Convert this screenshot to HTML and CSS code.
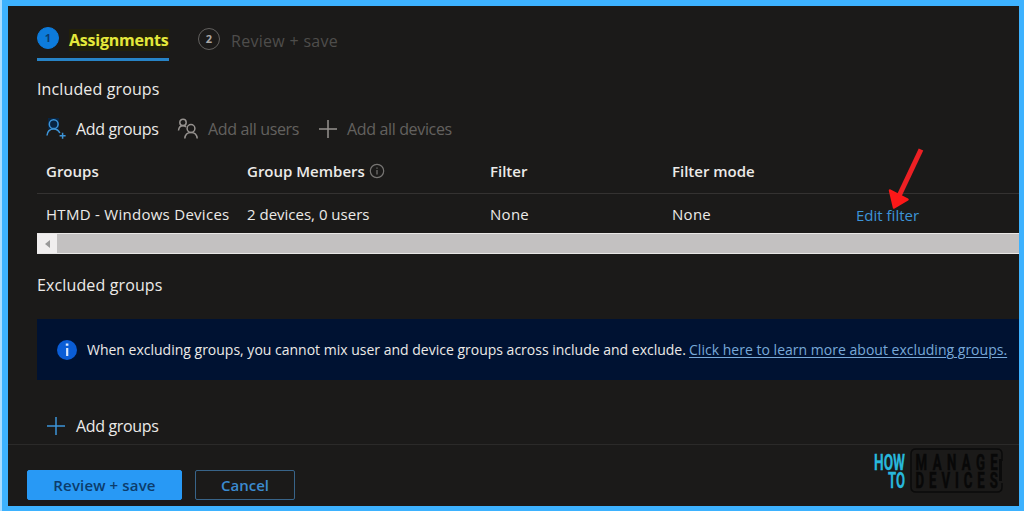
FILE: index.html
```html
<!DOCTYPE html>
<html lang="en">
<head>
    <meta charset="UTF-8">
    <title>Assignments</title>
    <link rel="stylesheet" href="styles.css">
</head>
<body>
    <div class="frame">
        <nav class="tabs">
            <div class="tab active">
                <span class="step">1</span>
                <span class="tab-label">Assignments</span>
            </div>
            <div class="tab">
                <span class="step">2</span>
                <span class="tab-label">Review + save</span>
            </div>
        </nav>

        <main class="content">
            <h2 class="included">Included groups</h2>

            <div class="toolbar">
                <button class="tool add-groups">
                    <svg width="22" height="22" viewBox="0 0 22 22">
                        <rect class="icon-shade" x="3" y="0" width="11" height="11" />
                        <circle cx="8.7" cy="6.2" r="4.4" />
                        <path d="M2 17.5C2.4 13.6 5 11 8.7 11c3 0 5 1.5 6.1 4M17.6 14.8v6M14.6 17.8h6" />
                    </svg>
                    <span>Add groups</span>
                </button>
                <button class="tool all-users disabled">
                    <svg width="22" height="22" viewBox="0 0 22 22">
                        <circle cx="6" cy="4.4" r="3.2" />
                        <path d="M1.5 12.5C1.8 9.900 3.500 7.800 6 7.800c1.300 0 2.300.4 3.100 1.100" />
                        <circle cx="14" cy="10.5" r="3.9" />
                        <path d="M7.800 20.500c.3-3.800 2.600-6.100 6.200-6.100s5.900 2.300 6.200 6.100" />
                    </svg>
                    <span>Add all users</span>
                </button>
                <button class="tool all-devices disabled">
                    <svg width="20" height="20" viewBox="0 0 20 20">
                        <path d="M10 1v18M1 10h18" />
                    </svg>
                    <span>Add all devices</span>
                </button>
            </div>

            <div class="table">
                <div class="row head">
                    <span>Groups</span>
                    <span class="members"><span>Group Members</span>
                        <svg width="16" height="16" viewBox="0 0 16 16">
                            <circle cx="8" cy="8" r="6.7" />
                            <path d="M8 7v4.5M8 4.500v1.300" />
                        </svg>
                    </span>
                    <span>Filter</span>
                    <span>Filter mode</span>
                </div>
                <div class="row">
                    <span class="name">HTMD - Windows Devices</span>
                    <span>2 devices, 0 users</span>
                    <span class="name">None</span>
                    <span class="name">None</span>
                    <a class="edit-filter">Edit filter</a>
                </div>
            </div>
            <div class="scrollbar">
                <div class="scroll-left"></div>
                <div class="scroll-thumb"></div>
            </div>

            <h2 class="excluded">Excluded groups</h2>

            <div class="banner">
                <svg width="20" height="20" viewBox="0 0 20 20">
                    <circle cx="10" cy="10" r="10" />
                    <path d="M8.500 8h2.800v8h-2.200V8M8.800 3.500h2.600v2.300H8.800z" />
                </svg>
                <span class="notice">When excluding groups, you cannot mix user and device groups across include and exclude.</span>
                <a class="learn-more">Click here to learn more about excluding groups.</a>
            </div>

            <button class="tool add-excluded">
                <svg width="20" height="20" viewBox="0 0 20 20">
                    <path d="M10 1v18M1 10h18" />
                </svg>
                <span>Add groups</span>
            </button>
        </main>

        <footer class="footer">
            <button class="btn primary">Review + save</button>
            <button class="btn cancel">Cancel</button>
            <svg class="brand" width="132" height="48" viewBox="0 0 132 48">
                <g class="brand-how">
                    <text x="1" y="24" textLength="31" lengthAdjust="spacingAndGlyphs">HOW</text>
                    <text x="15" y="42" textLength="17" lengthAdjust="spacingAndGlyphs">TO</text>
                </g>
                <path class="brand-box" d="M129 15V8q0-5-5-5H43q-5 0-5 5v33q0 5 5 5h81q5 0 5-5v-4" />
                <path class="brand-pen" d="M127.500 13v22" />
                <g class="brand-name" transform="scale(.6 1)">
                    <text x="71" y="24" textLength="137">MANAGE</text>
                    <text x="71" y="42" textLength="137">DEVICES</text>
                </g>
            </svg>
        </footer>
    </div>

    <svg class="arrow" width="40" height="66" viewBox="0 0 40 66">
        <path class="arrow-line" d="M35 3.500 13 50" />
        <path class="arrow-head" d="M4 44.500 21.500 53.500 8 61.500z" />
    </svg>
</body>
</html>
```

FILE: styles.css
```css
:root {
    --bg: #1b1a19;
    --frame: #3db2ff;
    --text: #eceae8;
    --muted: #63615f;
    --blue: #3d94d8;
}

* {
    box-sizing: border-box;
}

html {
    background: linear-gradient(90deg, #a9dcff 2px, var(--frame) 2px);
}

body {
    margin: 0;
    font-family: 'Open Sans', 'Noto Sans', sans-serif;
    font-size: 15px;
    color: var(--text);
}

svg {
    display: block;
    flex: none;
    fill: none;
    stroke: currentColor;
    stroke-width: 1.5;
}

.frame {
    display: flex;
    flex-direction: column;
    width: 1022px;
    height: 511px;
    margin-left: 2px;
    border: solid var(--frame);
    border-width: 6px 5px 5px 6px;
    background: var(--bg);
    overflow: hidden;
    white-space: nowrap;
}

.tabs {
    display: flex;
    gap: 29px;
    height: 55px;
    padding: 12px 0 0 29px;
}

.tab {
    display: flex;
    align-items: center;
    gap: 10px;
    height: 43px;
    color: #4e4d4b;
}

.step {
    flex: none;
    width: 22px;
    height: 22px;
    margin-bottom: 3px;
    border: 1.5px solid #62605e;
    border-radius: 50%;
    font-size: 11px;
    font-weight: 700;
    line-height: 19px;
    text-align: center;
    color: #aaa8a6;
}

.tab-label {
    padding-left: 1px;
    font-size: 16px;
    letter-spacing: 0.3px;
}

.tab.active {
    width: 132px;
    border-bottom: 3px solid #2783c6;
}

.tab.active .step {
    margin-bottom: 0;
    background: #0d7bdb;
    border-color: #0d7bdb;
    color: #0a3b70;
}

.tab.active .tab-label {
    margin-top: 4px;
    padding: 0;
    font-weight: 700;
    color: #e4e83b;
    background: #222009;
    letter-spacing: -0.22px;
    line-height: 22px;
}

.tab:not(.active) .step {
    margin-bottom: 1px;
}

.tab:not(.active) .tab-label {
    margin-top: 2px;
}

.content {
    height: 383px;
    padding-left: 29px;
}

h2 {
    margin: 0;
    font-size: 16px;
    font-weight: 400;
    letter-spacing: 0.13px;
}

.included {
    height: 54px;
    line-height: 56px;
}

.toolbar {
    display: flex;
    align-items: center;
    height: 27px;
    padding-left: 8px;
}

.tool {
    display: flex;
    align-items: center;
    gap: 9px;
    padding: 0;
    border: 0;
    background: none;
    color: var(--text);
    font: inherit;
    font-size: 16px;
    font-weight: 500;
    letter-spacing: -0.35px;
}

.tool svg {
    color: var(--blue);
}

.add-groups {
    width: 132px;
}

.all-users {
    width: 141px;
}

.disabled {
    color: var(--muted);
    font-weight: 400;
}

.disabled svg {
    color: #96928f;
}

.icon-shade {
    fill: #082543;
    stroke: none;
}

.row {
    display: grid;
    grid-template-columns: 201px 243px 182px 184px 1fr;
    align-items: center;
    height: 39px;
    padding-left: 9px;
}

.row.head {
    height: 52px;
    padding-top: 6px;
    border-bottom: 1px solid #343231;
    font-weight: 600;
}

.name {
    letter-spacing: 0.28px;
}

.members {
    display: flex;
    align-items: center;
    gap: 4px;
}

.members svg {
    color: #777573;
    stroke-width: 1.2;
}

.edit-filter {
    color: var(--blue);
    padding-top: 3px;
}

.scrollbar {
    display: flex;
    height: 21px;
    border: solid #e9e7e6;
    border-width: 1px 0;
    background: #c3c1c1;
}

.scroll-left {
    display: flex;
    align-items: center;
    justify-content: center;
    width: 20px;
    background: #f0eeee;
}

.scroll-left::before {
    content: '';
    border: solid transparent;
    border-width: 4px 5px 4px 0;
    border-right-color: #999;
}

.excluded {
    height: 65px;
    line-height: 62px;
}

.banner {
    display: flex;
    align-items: center;
    height: 61px;
    padding-left: 20px;
    background: #001232;
    font-size: 14px;
}

.banner svg {
    margin-right: 10px;
    stroke: none;
    fill: #d8e8ff;
}

.banner circle {
    fill: #0a5dd6;
}

.notice {
    width: 602px;
}

.learn-more {
    color: #78a9d9;
    text-decoration: underline;
    text-underline-offset: 2px;
    letter-spacing: 0.02px;
}

.add-excluded {
    gap: 10px;
    margin: 35px 0 0 9px;
}

.footer {
    display: flex;
    flex: 1;
    align-items: flex-start;
    border-top: 1px solid #2b2a29;
    padding-left: 19px;
}

.btn {
    height: 30px;
    margin-top: 25px;
    padding: 0 0 1px;
    border: 1px solid #2899f5;
    border-radius: 2px;
    font: inherit;
    font-weight: 600;
}

.primary {
    width: 155px;
    margin-right: 13px;
    background: #2899f5;
    color: #0c3c6c;
    letter-spacing: 0.15px;
}

.cancel {
    width: 100px;
    border-color: #386489;
    background: none;
    color: #3b8bd0;
}

.brand {
    margin: 1px 0 0 578px;
    stroke: none;
    font-family: 'Roboto', sans-serif;
    font-size: 22px;
    font-weight: 700;
}

.brand-how {
    fill: #28b8dc;
    stroke: #28b8dc;
    stroke-width: 0.3;
}

.brand-name {
    fill: #080808;
    stroke: #080808;
    stroke-width: 0.5;
}

.brand-box,
.brand-pen {
    stroke: #0b0b0b;
    stroke-width: 1.5;
}

.brand-pen {
    stroke-width: 3;
}

/* sits over the table, pointing at the filter link */
.arrow {
    position: absolute;
    left: 886px;
    top: 146px;
}

.arrow-line {
    stroke: #ed2024;
    stroke-width: 5;
}

.arrow-head {
    fill: #fc1818;
    stroke: #fc1818;
    stroke-width: 2.5;
    stroke-linejoin: round;
}
```
